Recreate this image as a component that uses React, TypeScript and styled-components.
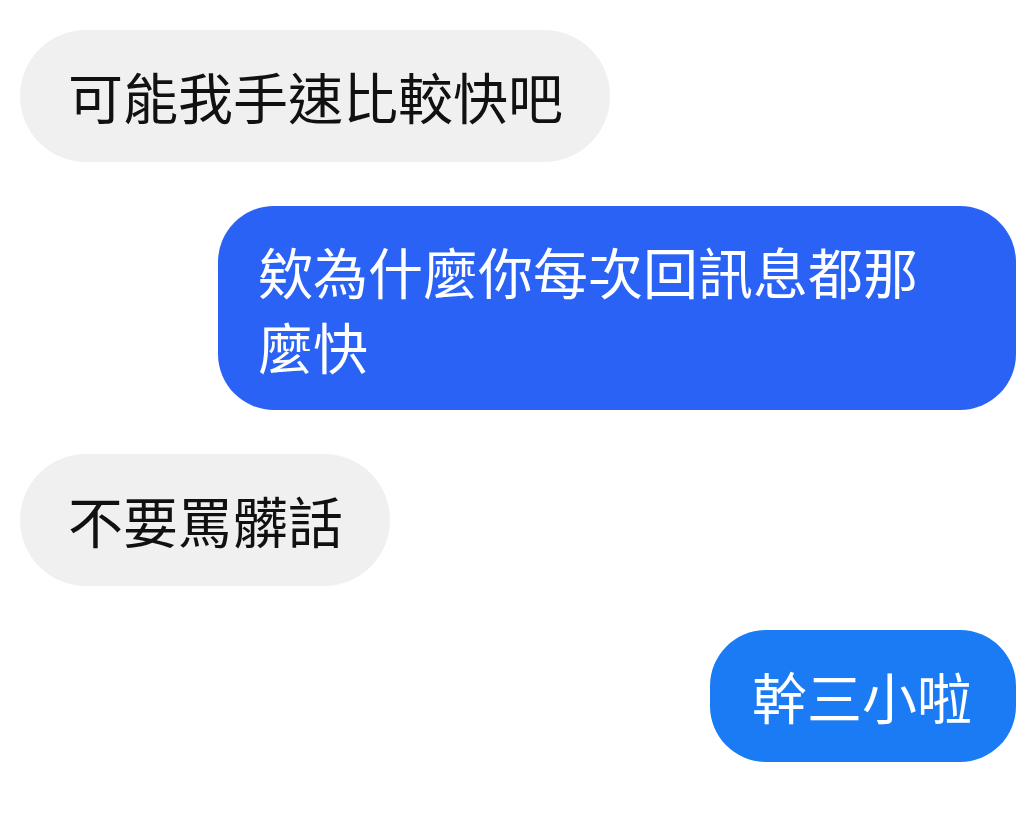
import { createGlobalStyle, styled } from 'styled-components';

const GlobalStyle = createGlobalStyle`
  html, body {
    margin: 0;
    padding: 0;
    background: #ffffff;
  }
`;

type Side = 'in' | 'out';
type Tone = 'deep' | 'light';

interface Message {
  id: number;
  side: Side;
  text: string;
  tone?: Tone;
}

const messages: Message[] = [
  { id: 1, side: 'in', text: '可能我手速比較快吧' },
  { id: 2, side: 'out', text: '欸為什麼你每次回訊息都那麼快', tone: 'deep' },
  { id: 3, side: 'in', text: '不要罵髒話' },
  { id: 4, side: 'out', text: '幹三小啦', tone: 'light' },
];

const App = () => (
  <>
    <GlobalStyle />
    <S.ChatLayout>
      {messages.map((msg) => (
        <S.Row key={msg.id} $side={msg.side}>
          <S.Bubble $side={msg.side} $tone={msg.tone}>
            {msg.text}
          </S.Bubble>
        </S.Row>
      ))}
    </S.ChatLayout>
  </>
);

export default App;

const bubblePadding = (tone?: Tone) => {
  if (tone === 'deep') return '27px 46px 27px 40px';
  if (tone === 'light') return '28px 44px 29px 42px';
  return '28px 47px 29px 48px';
};

const ChatLayout = styled.div`
  display: flex;
  flex-direction: column;
  gap: 44px;

  width: 1024px;
  height: 829px;
  padding: 30px 8px 0 20px;
  box-sizing: border-box;

  background: #ffffff;
`;

const Row = styled.div<{ $side: Side }>`
  display: flex;
  justify-content: ${({ $side }) => ($side === 'out' ? 'flex-end' : 'flex-start')};
`;

const Bubble = styled.div<{ $side: Side; $tone?: Tone }>`
  box-sizing: border-box;
  max-width: 798px;
  padding: ${({ $tone }) => bubblePadding($tone)};
  border-radius: ${({ $side }) => ($side === 'out' ? '56px' : '66px')};

  background: ${({ $side, $tone }) =>
    $side === 'in' ? '#f0f0f0' : $tone === 'deep' ? '#2a62f5' : '#1a7bf4'};

  color: ${({ $side }) => ($side === 'in' ? '#111111' : '#ffffff')};
  font-family: 'Noto Sans CJK TC', 'Noto Sans CJK SC', sans-serif;
  font-size: 55px;
  font-weight: 400;
  line-height: 75px;
  letter-spacing: 0;
`;

const S = {
  ChatLayout,
  Row,
  Bubble,
};
